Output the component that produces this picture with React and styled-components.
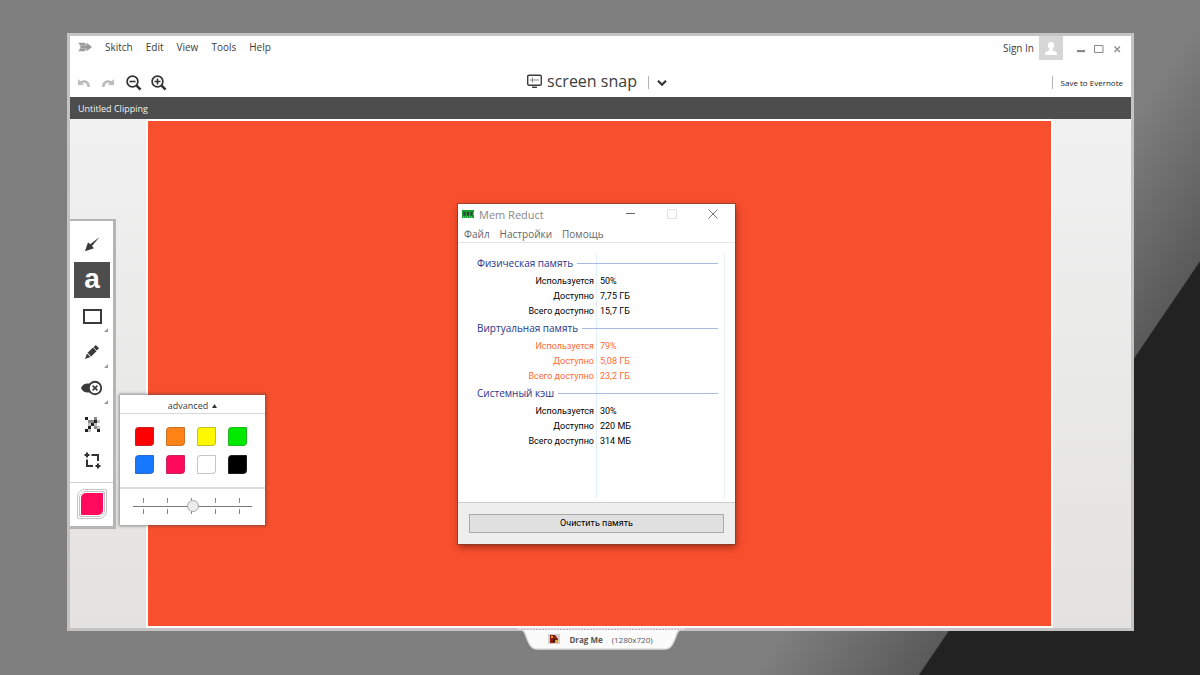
import React, { useState } from "react";
import styled, { createGlobalStyle } from "styled-components";

const GlobalStyle = createGlobalStyle`
  *,
  *::before {
    box-sizing: border-box;
  }

  body {
    margin: 0;
    font-family: "Open Sans", "Noto Sans", sans-serif;
    color: #3c3c3c;
  }

  button {
    padding: 0;
    border: 0;
    background: none;
    font: inherit;
    color: inherit;
    cursor: pointer;
  }

  svg {
    display: block;
  }
`;

const Desktop = styled.main`
  display: flex;
  flex-direction: column;
  min-height: 100vh;
  padding: 33px 66px 25px 67px;
  background: linear-gradient(
    124.2deg,
    #7f7f7f 73%,
    #5a5a5a 83%,
    #222222 83.1%
  );
`;

const AppWindow = styled.section`
  flex: 1;
  display: flex;
  flex-direction: column;
  border: 3px solid #c2c3c2;
  background: #fff;
`;

const TitleBar = styled.header`
  display: flex;
  justify-content: space-between;
  align-items: flex-start;
  height: 32px;
  padding: 0 9px 0 8px;
`;

const MenuBar = styled.nav`
  display: flex;
  align-items: center;
  gap: 13px;
  height: 22px;
  font-size: 10px;
`;

const Account = styled.div`
  display: flex;
  align-items: center;
  font-size: 10px;
`;

const Avatar = styled.span`
  display: flex;
  justify-content: center;
  align-items: center;
  width: 24px;
  height: 24px;
  margin: 0 13px 0 5px;
  background: #d6d6d6;
`;

const WindowButtons = styled.div`
  display: flex;
  align-items: center;
  gap: 8px;
  padding-top: 2px;
`;

const ToolBar = styled.div`
  display: grid;
  grid-template-columns: 1fr auto 1fr;
  align-items: center;
  height: 29px;
  padding: 0 8px;
`;

const History = styled.div`
  display: flex;
  align-items: center;
  gap: 12px;
`;

const ZoomButtons = styled.div`
  display: flex;
  gap: 9px;
`;

const SnapButton = styled.button`
  display: flex;
  align-items: center;
  gap: 5px;
  font-size: 16px;
  line-height: 24px;
  padding-bottom: 3px;
`;

const Snap = styled.div`
  display: flex;
  align-items: center;
  padding-right: 7px;
`;

const Rule = styled.span`
  width: 1px;
  height: 13px;
  margin: 0 8px 0 11px;
  background: #b4b4b4;
`;

const SaveArea = styled.div`
  display: flex;
  justify-content: flex-end;
  align-items: center;
  font-size: 8px;
  color: #222;
`;

const ClippingTitle = styled.h1`
  margin: 0;
  padding: 1px 8px 0;
  font-size: 9px;
  font-weight: 400;
  line-height: 21px;
  color: #f2f2f2;
  background: #4d4d4d;
`;

const Workspace = styled.div`
  flex: 1;
  display: grid;
  grid-template-columns: 76px 1fr 78px;
  background: linear-gradient(#f1f1f1, #e3e2e1);
`;

const Gutter = styled.div`
  padding-top: 100px;
`;

const Picture = styled.div`
  display: flex;
  justify-content: center;
  align-items: center;
  padding-right: 6px;
  border: 2px solid #fff;
  background: #f84f2e;
`;

const Tools = styled.aside`
  position: relative;
  width: 46px;
  border: 2px solid #b5b5b5;
  border-width: 2px 3px 3px 0;
  background: #fff;
`;

const ToolList = styled.div`
  display: flex;
  flex-direction: column;
  padding: 5px 3px 4px 4px;
  border-bottom: 1px solid #d0d0d0;
`;

const ToolButton = styled.button`
  position: relative;
  display: flex;
  justify-content: center;
  align-items: center;
  height: 36px;
  font-family: "Liberation Sans", Arial, sans-serif;
  font-size: 28px;
  font-weight: 700;
  line-height: 30px;
  padding-bottom: ${props => (props.$active ? 3 : 0)}px;
  color: ${props => (props.$active ? "#fff" : "#3a3a3a")};
  background: ${props => (props.$active ? "#4d4d4d" : "transparent")};

  &::after {
    content: "";
    display: ${props => (props.$more ? "block" : "none")};
    position: absolute;
    right: 2px;
    bottom: 2px;
    border: 2px solid #999;
    border-top-color: transparent;
    border-left-color: transparent;
  }
`;

const ColorButton = styled.button`
  display: block;
  width: 30px;
  height: 30px;
  margin: 6px 0 7px 7px;
  padding: 1px;
  border: 1px solid #c4c4c4;
  border-radius: 8px 1px;

  &::before {
    content: "";
    display: block;
    height: 26px;
    padding: 1px;
    border: 1px solid #c4c4c4;
    border-radius: 7px 1px;
    background: ${props => props.$color} content-box;
  }
`;

const Palette = styled.div`
  position: absolute;
  left: 50px;
  top: 174px;
  z-index: 2;
  width: 145px;
  background: #fff;
  box-shadow: 0 0 3px 1px rgba(60, 60, 60, 0.55);
`;

const AdvancedButton = styled.button`
  display: flex;
  justify-content: center;
  align-items: center;
  gap: 4px;
  width: 100%;
  height: 19px;
  padding-top: 3px;
  border-bottom: 1px solid #d8d8d8;
  font-size: 9px;
`;

const Swatches = styled.div`
  display: grid;
  grid-template-columns: repeat(4, 19px);
  gap: 9px 12px;
  padding: 13px 15px;
`;

const Swatch = styled.button`
  height: 19px;
  border: 1px solid rgba(90, 90, 90, 0.35);
  border-radius: 4px 1px;
  background: ${props => props.$color};
`;

const SizeArea = styled.div`
  padding: 9px 13px 11px;
  border-top: 2px solid #dedede;
`;

// tick marks sit above and below the track, the range input covers them
const Ticks = styled.div`
  display: flex;
  align-items: center;
  height: 16px;
  background:
    linear-gradient(#777, #777) 0 8px / 100% 1px no-repeat,
    linear-gradient(#fff, #fff) 0 5px / 100% 6px no-repeat,
    repeating-linear-gradient(90deg, #888 0 1px, transparent 1px 24px) 10px 0 /
      99px 100% no-repeat;
`;

const SizeInput = styled.input`
  appearance: none;
  width: 100%;
  height: 16px;
  margin: 0;
  background: transparent;

  &::-webkit-slider-thumb {
    appearance: none;
    width: 12px;
    height: 12px;
    border: 1px solid #aaa;
    border-radius: 50%;
    background: #ececec;
  }
`;

const MemWindow = styled.section`
  width: 277px;
  background: #fff;
  box-shadow: 0 0 0 1px rgba(130, 60, 45, 0.7), 1px 3px 7px rgba(90, 20, 0, 0.6);
`;

const MemTitle = styled.header`
  display: flex;
  align-items: center;
  height: 21px;
  padding: 0 17px 0 4px;
  font-size: 11px;
  color: #888;
`;

const MemName = styled.h2`
  flex: 1;
  margin: 0 0 0 5px;
  font-size: 11px;
  font-weight: 400;
`;

const MemControls = styled.div`
  display: flex;
  gap: 31px;
`;

const MemMenu = styled.nav`
  display: flex;
  gap: 10px;
  padding: 2px 6px 0;
  border-bottom: 1px solid #e6e6e6;
  font-size: 10px;
  line-height: 15px;
  color: #666;
`;

const MemList = styled.div`
  padding: 11px 10px 4px 18px;
`;

const MemColumns = styled.div`
  min-height: 244px;
  border-right: 1px solid #e6f1fb;
  background: linear-gradient(#e0effc, #e0effc) 120px 0 / 1px 100% no-repeat;
`;

const MemTable = styled.table`
  width: 100%;
  border-collapse: collapse;
  font-family: Roboto, "Noto Sans", sans-serif;
  font-size: 9px;
  line-height: 15px;

  th,
  td {
    padding: 0;
    font-weight: 400;
    text-align: left;
  }
`;

const GroupName = styled.span`
  display: flex;
  align-items: center;
  gap: 4px;
  height: 20px;
  margin: 0 6px 0 1px;
  font-family: "Open Sans", "Noto Sans", sans-serif;
  font-size: 10px;
  white-space: nowrap;
  color: #28348c;

  &::after {
    content: "";
    flex: 1;
    height: 1px;
    background: #a9bbdf;
  }
`;

const MemRow = styled.tr`
  color: ${props => (props.$warn ? "#ff6a35" : "#000")};

  th {
    width: 118px;
    text-align: right;
  }

  td {
    padding-left: 6px;
  }
`;

const MemFooter = styled.footer`
  padding: 11px 11px 11px;
  border-top: 1px solid #cfcfcf;
  background: #eee;
`;

const CleanButton = styled.button`
  display: block;
  width: 100%;
  height: 19px;
  border: 1px solid #a9a9a9;
  background: #e0e0e0;
  font-family: Roboto, "Noto Sans", sans-serif;
  font-size: 9px;
  color: #000;
`;

const DragTab = styled.footer`
  position: relative;
  display: flex;
  justify-content: center;
  align-items: center;
  align-self: center;
  gap: 9px;
  width: 168px;
  height: 22px;
  margin-top: -3px;
  font-size: 8px;
  color: #555;
`;

const TabShape = styled.svg`
  position: absolute;
  inset: 0;
`;

const DragLabel = styled.strong`
  position: relative;
`;

const DragSize = styled.span`
  position: relative;
`;

const DragThumb = styled.svg`
  position: relative;
`;

const BrandIcon = () => (
  <svg width="14" height="10" viewBox="0 0 14 10" fill="#999">
    <path d="M0 .7h6.500L9 3.500 8.300 .5 14 5 8.300 9.500 9 6.500 6.500 9.300H0L2.500 6.500H1.200L3 5 1.200 3.500h1.300z" />
    <path d="M2.500 3.400H8M2.500 6.600H8" stroke="#ddd" strokeWidth=".5" />
  </svg>
);

const UndoIcon = ({ flip }) => (
  <svg width="12" height="10" viewBox="0 0 12 10" fill="#bcbcbc">
    <path
      transform={flip ? "translate(12 0) scale(-1 1)" : undefined}
      d="M0 1v6h6.200L4.300 5.200c2.600-1 4.600.2 5.200 3.800H12C12 3.500 7.500 .5 2.300 3.200z"
    />
  </svg>
);

const ZoomIcon = ({ plus }) => (
  <svg width="16" height="16" viewBox="0 0 16 16" fill="none" stroke="#333">
    <circle cx="6.500" cy="6.500" r="5.400" strokeWidth="1.700" />
    <path d="M10.600 10.600l4 4" strokeWidth="2.600" />
    <path d={plus ? "M3.500 6.500h6M6.500 3.500v6" : "M3.500 6.500h6"} strokeWidth="1.600" />
  </svg>
);

const ScreenIcon = () => (
  <svg width="15" height="14" viewBox="0 0 15 14" fill="none" stroke="#3c3c3c">
    <rect x=".7" y="1.200" width="13.600" height="10" rx="1.200" strokeWidth="1.400" />
    <path d="M5 13.300h5" strokeWidth="1.400" />
    <path d="M5.500 3.500v5M3 6h9" stroke="#888" strokeWidth="1" />
  </svg>
);

const toolIcons = {
  arrow: (
    <svg width="16" height="16" viewBox="0 0 16 16" fill="#3a3a3a">
      <path d="M15.500 1L8 10l2 2.300-9 3 3-9L6.200 8.200z" />
    </svg>
  ),
  rect: (
    <svg width="19" height="15" viewBox="0 0 19 15" fill="none" stroke="#3a3a3a">
      <rect x="1" y="1" width="17" height="13" strokeWidth="2" />
    </svg>
  ),
  marker: (
    <svg width="16" height="16" viewBox="0 0 16 16" fill="#3a3a3a">
      <path d="M11.800 1L15 4.200l-2.200 2.200-3.300-3.200zM9 3.600l3.500 3.600-5.300 5.300-3.700-3.700zM3 9.500l3.500 3.500L1 15z" />
    </svg>
  ),
  stamp: (
    <svg width="22" height="16" viewBox="0 0 22 16" fill="#3a3a3a">
      <path d="M0 8c2-4.500 5-4.500 9-4.500v9C5 12.500 2 12.500 0 8z" />
      <circle cx="14" cy="8" r="6.200" fill="#fff" stroke="#3a3a3a" strokeWidth="1.900" />
      <path d="M11.600 5.600l4.800 4.800M16.400 5.600l-4.800 4.800" stroke="#3a3a3a" strokeWidth="1.600" />
    </svg>
  ),
  pixelate: (
    <svg width="15" height="15" viewBox="0 0 15 15" fill="#222">
      <path d="M0 0h3v3H0zM6 6h3v3H6zM3 9h3v3H3zM12 12h3v3h-3zM9 3h3v3H9zM0 12h3v3H0z" />
      <path d="M3 3h3v3H3zM9 0h3v3H9zM6 3h3v3H6zM9 9h3v3H9z" fill="#888" />
      <path d="M3 6h3v3H3zM12 3h3v3h-3zM9 6h3v3H9zM3 12h3v3H3zM12 9h3v3h-3z" fill="#c4c4c4" />
    </svg>
  ),
  crop: (
    <svg width="17" height="17" viewBox="0 0 17 17" fill="none" stroke="#333" strokeWidth="2">
      <path d="M3 .5v5M.5 3h5M7.500 3H14v6M3 7.500V14h6M14 11.500v5M11.500 14h5" />
    </svg>
  )
};

const tools = [
  { name: "arrow" },
  { name: "text" },
  { name: "rect", more: true },
  { name: "marker", more: true },
  { name: "stamp", more: true },
  { name: "pixelate" },
  { name: "crop" }
];

const colors = [
  "#ff0000",
  "#ff8214",
  "#fff800",
  "#00ea00",
  "#1677ff",
  "#ff0a5c",
  "#ffffff",
  "#000000"
];

const groups = [
  {
    name: "Физическая память",
    rows: [["Используется", "50%"], ["Доступно", "7,75 ГБ"], ["Всего доступно", "15,7 ГБ"]]
  },
  {
    name: "Виртуальная память",
    warn: true,
    rows: [["Используется", "79%"], ["Доступно", "5,08 ГБ"], ["Всего доступно", "23,2 ГБ"]]
  },
  {
    name: "Системный кэш",
    rows: [["Используется", "30%"], ["Доступно", "220 МБ"], ["Всего доступно", "314 МБ"]]
  }
];

const Header = () => (
  <>
    <TitleBar>
      <MenuBar>
        <BrandIcon />
        {["Skitch", "Edit", "View", "Tools", "Help"].map(item => (
          <button key={item}>{item}</button>
        ))}
      </MenuBar>
      <Account>
        <button>Sign In</button>
        <Avatar>
          <svg width="12" height="13" viewBox="0 0 12 13" fill="#fff">
            <path d="M6 0c2 0 3.200 1.300 3.200 3.300 0 1.800-.8 3-1.700 3.600v1.400c1.500.7 4.500 1.200 4.500 3.400V13H0v-1.300c0-2.200 3-2.700 4.500-3.400V6.900C3.600 6.300 2.800 5.100 2.800 3.300 2.800 1.300 4 0 6 0z" />
          </svg>
        </Avatar>
        <WindowButtons>
          <button aria-label="Minimize">
            <svg width="10" height="10" viewBox="0 0 10 10" fill="#888">
              <path d="M1 6h8v2.200H1z" />
            </svg>
          </button>
          <button aria-label="Maximize">
            <svg width="10" height="10" viewBox="0 0 10 10" fill="none" stroke="#888">
              <path d="M.5 1.500h8.500v7H.5z" />
            </svg>
          </button>
          <button aria-label="Close">
            <svg width="10" height="10" viewBox="0 0 10 10" stroke="#888" strokeWidth="1.200">
              <path d="M2.500 2.500l5.500 5.500M8 2.500L2.500 8" />
            </svg>
          </button>
        </WindowButtons>
      </Account>
    </TitleBar>
    <ToolBar>
      <History>
        <button aria-label="Undo"><UndoIcon /></button>
        <button aria-label="Redo"><UndoIcon flip /></button>
        <ZoomButtons>
          <button aria-label="Zoom out"><ZoomIcon /></button>
          <button aria-label="Zoom in"><ZoomIcon plus /></button>
        </ZoomButtons>
      </History>
      <Snap>
        <SnapButton>
          <ScreenIcon />
          screen snap
        </SnapButton>
        <Rule />
        <button aria-label="Snap options">
          <svg width="10" height="8" viewBox="0 0 10 8" fill="none" stroke="#333" strokeWidth="2.200">
            <path d="M1 1.800l4 4 4-4" />
          </svg>
        </button>
      </Snap>
      <SaveArea>
        <Rule />
        <button>Save to Evernote</button>
      </SaveArea>
    </ToolBar>
  </>
);

const ColorPalette = props => {
  const [size, setSize] = useState(3);

  return (
    <Palette>
      <AdvancedButton>
        advanced
        <svg width="5" height="4" viewBox="0 0 5 4" fill="#333">
          <path d="M2.500 0L5 4H0z" />
        </svg>
      </AdvancedButton>
      <Swatches>
        {colors.map(color => (
          <Swatch
            key={color}
            $color={color}
            aria-label={color}
            onClick={() => props.handlePick(color)}
          />
        ))}
      </Swatches>
      <SizeArea>
        <Ticks>
          <SizeInput
            type="range"
            min="1"
            max="5"
            aria-label="Size"
            value={size}
            onChange={e => setSize(Number(e.target.value))}
          />
        </Ticks>
      </SizeArea>
    </Palette>
  );
};

const ToolPanel = () => {
  const [active, setActive] = useState("text");
  const [color, setColor] = useState("#ff0a5c");

  return (
    <Tools>
      <ToolList>
        {tools.map(tool => (
          <ToolButton
            key={tool.name}
            aria-label={tool.name}
            $active={tool.name === active}
            $more={tool.more}
            onClick={() => setActive(tool.name)}
          >
            {toolIcons[tool.name] || "a"}
          </ToolButton>
        ))}
      </ToolList>
      <ColorButton $color={color} aria-label="Color" />
      <ColorPalette handlePick={setColor} />
    </Tools>
  );
};

const MemReduct = () => (
  <MemWindow>
    <MemTitle>
      <svg width="12" height="8" viewBox="0 0 12 8">
        <path d="M0 0h12v3l-1 1 1 1v3H0z" fill="#18a030" />
        <path d="M1.500 2h2v3.500h-2zM5 2h2v3.500H5zM8.500 2h2v3.500h-2z" fill="#3b3b3b" />
        <path d="M1 7h10" stroke="#8fe08f" strokeDasharray="1 1" />
      </svg>
      <MemName>Mem Reduct</MemName>
      <MemControls>
        <button aria-label="Свернуть">
          <svg width="10" height="10" viewBox="0 0 10 10" stroke="#666">
            <path d="M0 4.500h9" />
          </svg>
        </button>
        <button aria-label="Развернуть">
          <svg width="10" height="10" viewBox="0 0 10 10" fill="none" stroke="#e2e2e2">
            <path d="M.5 .5h9v9h-9z" />
          </svg>
        </button>
        <button aria-label="Закрыть">
          <svg width="10" height="10" viewBox="0 0 10 10" stroke="#777">
            <path d="M.5 .5l9 9M9.500 .5l-9 9" />
          </svg>
        </button>
      </MemControls>
    </MemTitle>
    <MemMenu>
      {["Файл", "Настройки", "Помощь"].map(item => (
        <button key={item}>{item}</button>
      ))}
    </MemMenu>
    <MemList>
      <MemColumns>
        <MemTable>
          {groups.map(group => (
            <tbody key={group.name}>
              <tr>
                <th colSpan="2" scope="rowgroup">
                  <GroupName>{group.name}</GroupName>
                </th>
              </tr>
              {group.rows.map(([label, value]) => (
                <MemRow key={label} $warn={group.warn}>
                  <th scope="row">{label}</th>
                  <td>{value}</td>
                </MemRow>
              ))}
            </tbody>
          ))}
        </MemTable>
      </MemColumns>
    </MemList>
    <MemFooter>
      <CleanButton>Очистить память</CleanButton>
    </MemFooter>
  </MemWindow>
);

const App = () => (
  <Desktop>
    <GlobalStyle />
    <AppWindow>
      <Header />
      <ClippingTitle>Untitled Clipping</ClippingTitle>
      <Workspace>
        <Gutter>
          <ToolPanel />
        </Gutter>
        <Picture>
          <MemReduct />
        </Picture>
      </Workspace>
    </AppWindow>
    <DragTab>
      <TabShape width="168" height="22" viewBox="0 0 168 22">
        <path
          d="M0 .5C9 1 8 7 11 13c2 5 4 8 9 8h128c5 0 7-3 9-8 3-6 2-12 11-12.500z"
          fill="#fbfbfb"
          stroke="#dcdcdc"
          strokeWidth="1.500"
        />
        <path d="M4 1.500h160" stroke="#b8b8b8" strokeDasharray="2 1" />
      </TabShape>
      <DragThumb width="12" height="10" viewBox="0 0 12 10">
        <path d="M0 0h12v10H0z" fill="#d5d0cc" />
        <path d="M2 1h5l3 4v4H2z" fill="#8c1c12" />
        <path d="M3 2h2v2H3zM7 6h3v3H7z" fill="#f0a020" />
        <path d="M5 5h2v3H5z" fill="#222" />
      </DragThumb>
      <DragLabel>Drag Me</DragLabel>
      <DragSize>(1280x720)</DragSize>
    </DragTab>
  </Desktop>
);

export default App;
